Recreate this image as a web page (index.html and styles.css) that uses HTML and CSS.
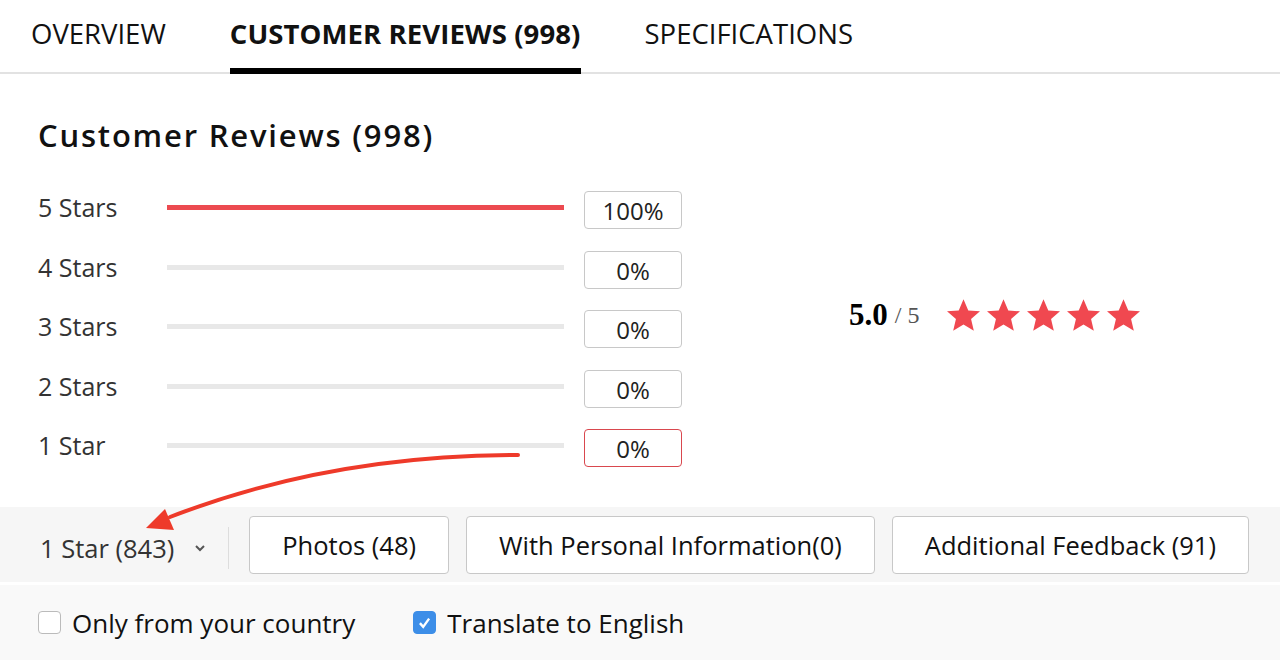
FILE: index.html
```html
<!DOCTYPE html>
<html lang="en">
<head>
  <meta charset="UTF-8">
  <title>Customer Reviews</title>
  <link rel="stylesheet" href="styles.css">
</head>
<body>

  <div class="tabs">
    <div class="tab">OVERVIEW</div>
    <div class="tab active">CUSTOMER REVIEWS (998)</div>
    <div class="tab">SPECIFICATIONS</div>
  </div>

  <div class="reviews">
    <h2 class="title">Customer Reviews (998)</h2>

    <div class="summary">
      <div class="rows">
        <div class="row">
          <span class="label">5 Stars</span>
          <div class="bar"><div class="fill" style="width: 100%"></div></div>
          <span class="pct">100%</span>
        </div>
        <div class="row">
          <span class="label">4 Stars</span>
          <div class="bar"><div class="fill" style="width: 0%"></div></div>
          <span class="pct">0%</span>
        </div>
        <div class="row">
          <span class="label">3 Stars</span>
          <div class="bar"><div class="fill" style="width: 0%"></div></div>
          <span class="pct">0%</span>
        </div>
        <div class="row">
          <span class="label">2 Stars</span>
          <div class="bar"><div class="fill" style="width: 0%"></div></div>
          <span class="pct">0%</span>
        </div>
        <div class="row">
          <span class="label">1 Star</span>
          <div class="bar"><div class="fill" style="width: 0%"></div></div>
          <span class="pct selected">0%</span>
        </div>
      </div>

      <div class="rating">
        <span class="score">5.0</span>
        <span class="out-of">/ 5</span>
        <div class="stars">
          <svg viewBox="0 0 24 24"><path d="M12 1.5l3.1 7.2 7.6.6-5.8 5 1.8 7.6L12 17.8l-6.7 4.1 1.8-7.6-5.8-5 7.6-.6z"/></svg>
          <svg viewBox="0 0 24 24"><path d="M12 1.5l3.1 7.2 7.6.6-5.8 5 1.8 7.6L12 17.8l-6.7 4.1 1.8-7.6-5.8-5 7.6-.6z"/></svg>
          <svg viewBox="0 0 24 24"><path d="M12 1.5l3.1 7.2 7.6.6-5.8 5 1.8 7.6L12 17.8l-6.7 4.1 1.8-7.6-5.8-5 7.6-.6z"/></svg>
          <svg viewBox="0 0 24 24"><path d="M12 1.5l3.1 7.2 7.6.6-5.8 5 1.8 7.6L12 17.8l-6.7 4.1 1.8-7.6-5.8-5 7.6-.6z"/></svg>
          <svg viewBox="0 0 24 24"><path d="M12 1.5l3.1 7.2 7.6.6-5.8 5 1.8 7.6L12 17.8l-6.7 4.1 1.8-7.6-5.8-5 7.6-.6z"/></svg>
        </div>
      </div>
    </div>
  </div>

  <div class="filters">
    <div class="dropdown">
      1 Star (843)
      <svg class="chevron" viewBox="0 0 12 8"><path d="M2 2l4 4 4-4" /></svg>
    </div>
    <div class="divider"></div>
    <button class="filter-btn">Photos (48)</button>
    <button class="filter-btn">With Personal Information(0)</button>
    <button class="filter-btn">Additional Feedback (91)</button>
  </div>

  <div class="options">
    <label class="check"><span class="box"></span>Only from your country</label>
    <label class="check"><span class="box on"><svg viewBox="0 0 16 16"><path d="M4.5 8.5l2.5 2.8L11.5 5" /></svg></span>Translate to English</label>
  </div>

  <svg class="arrow" width="1280" height="660" viewBox="0 0 1280 660">
    <path d="M518 455 Q330 455 170 517" fill="none" stroke="#ee3a2a" stroke-width="4" stroke-linecap="round"/>
    <polygon points="146,528 165,509 174,530" fill="#ee3a2a"/>
  </svg>

</body>
</html>
```

FILE: styles.css
```css
body {
  margin: 0;
  background: #fff;
  color: #111;
  font-family: "Open Sans", Arial, sans-serif;
  position: relative;
  height: 660px;
  overflow: hidden;
}

/* tabs */
.tabs {
  display: flex;
  gap: 64px;
  padding-left: 31px;
  border-bottom: 2px solid #e2e2e2;
}

.tab {
  font-size: 27.5px;
  line-height: 68px;
  border-bottom: 6px solid transparent;
  margin-bottom: -2px;
  color: #111;
}

.tab.active {
  font-weight: 700;
  letter-spacing: 0.1px;
  border-bottom-color: #000;
}

/* summary */
.reviews {
  padding: 0 38px;
}

.title {
  margin: 0;
  padding-top: 38px;
  font-size: 31px;
  font-weight: 600;
  letter-spacing: 1.8px;
  line-height: 46px;
  color: #111;
}

.summary {
  display: flex;
  align-items: center;
  margin-top: 33px;
}

.rows {
  display: flex;
  flex-direction: column;
  gap: 21.5px;
}

.row {
  display: flex;
  align-items: center;
  height: 38px;
}

.label {
  width: 129px;
  font-size: 25px;
  color: #333;
  margin-top: -6px;
}

.bar {
  width: 397px;
  height: 5px;
  background: #e8e8e8;
  margin-top: -5px;
}

.fill {
  height: 100%;
  background: #ec4a50;
}

.pct {
  margin-left: 20px;
  width: 96px;
  height: 36px;
  border: 1px solid #c8c8c8;
  border-radius: 4px;
  text-align: center;
  line-height: 38px;
  font-size: 24px;
  color: #222;
}

.pct.selected {
  border-color: #d9474e;
}

.rating {
  display: flex;
  align-items: center;
  margin-left: 167px;
  margin-bottom: 28px;
  font-family: "Liberation Serif", "Times New Roman", serif;
}

.score {
  font-size: 31px;
  font-weight: 700;
  color: #000;
}

.out-of {
  margin-left: 7px;
  font-size: 24px;
  color: #555;
}

.stars {
  display: flex;
  gap: 3px;
  margin-left: 26px;
}

.stars svg {
  width: 37px;
  height: 37px;
  fill: #f04850;
}

/* filters */
.filters {
  display: flex;
  align-items: center;
  margin-top: 40px;
  height: 75px;
  padding-left: 40px;
  background: #f6f6f6;
  border-bottom: 3px solid #fff;
}

.dropdown {
  display: flex;
  align-items: center;
  font-size: 25.5px;
  color: #333;
  padding-top: 7px;
}

.chevron {
  width: 12px;
  height: 8px;
  margin-left: 20px;
  fill: none;
  stroke: #555;
  stroke-width: 2;
}

.divider {
  width: 1px;
  height: 42px;
  background: #ddd;
  margin: 6px 20px 0 22px;
}

.filter-btn {
  height: 58px;
  margin-right: 17px;
  padding: 0 32px;
  background: #fff;
  border: 1px solid #c8c8c8;
  border-radius: 4px;
  font-family: "Open Sans", Arial, sans-serif;
  font-size: 25.5px;
  color: #111;
}

.options {
  display: flex;
  align-items: center;
  gap: 58px;
  height: 75px;
  padding-left: 38px;
  background: #f9f9f9;
}

.check {
  display: flex;
  align-items: center;
  font-size: 26px;
  color: #111;
}

.box {
  width: 21px;
  height: 21px;
  border: 1px solid #bbb;
  border-radius: 4px;
  background: #fff;
  margin-right: 11px;
}

.box.on {
  background: #3d8ee8;
  border-color: #3d8ee8;
}

.box svg {
  display: block;
  width: 21px;
  height: 21px;
  fill: none;
  stroke: #fff;
  stroke-width: 1.8;
}

/* annotation overlay */
.arrow {
  position: absolute;
  top: 0;
  left: 0;
  pointer-events: none;
}
```
